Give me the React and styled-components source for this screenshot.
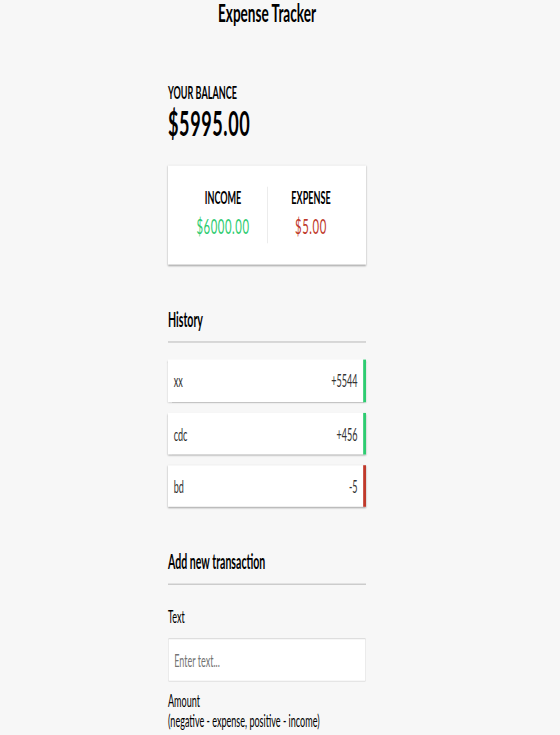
import React from 'react';
import styled, { createGlobalStyle } from 'styled-components';

const GlobalStyle = createGlobalStyle`
  *, *::before, *::after { box-sizing: border-box; }
  html, body { margin: 0; padding: 0; background: #f7f7f7; overflow: hidden; }
  body { font-family: Lato, "Open Sans", sans-serif; color: #000; }
`;

const Page = styled.div`
  display: flex;
  justify-content: center;
  padding-right: 26px;
  height: 735px;
  overflow: hidden;
`;

/* The whole sheet is drawn at its design size and squeezed like the reference */
const Sheet = styled.div`
  flex: none;
  width: 350px;
  transform: scale(0.5657, 1.067);
  transform-origin: top center;
`;

const Title = styled.h2`
  margin: 0;
  font-size: 24px;
  line-height: 24px;
  font-weight: 700;
  text-align: center;
`;

const Container = styled.div`
  margin-top: 53px;
`;

const Caption = styled.h4`
  margin: 0;
  font-size: 16px;
  line-height: 19.2px;
  font-weight: 700;
  text-transform: uppercase;
`;

const Balance = styled.h1`
  margin: 0;
  font-size: 32px;
  line-height: 38.4px;
  font-weight: 700;
  letter-spacing: 1px;
`;

const shadow = '0 1px 3px rgba(0,0,0,0.12), 0 1px 2px rgba(0,0,0,0.24)';

const Card = styled.div`
  display: flex;
  margin: 20px 0;
  padding: 20px;
  background: #fff;
  box-shadow: ${shadow};
`;

const Half = styled.div`
  flex: 1;
  text-align: center;
  border-right: ${(p) => (p.$divider ? '1px solid #dedede' : '0')};
`;

const Money = styled.p`
  margin: 5px 0;
  font-size: 20px;
  line-height: 24px;
  letter-spacing: 1px;
  color: ${(p) => (p.$kind === 'plus' ? '#2ecc71' : '#c0392b')};
`;

const SectionTitle = styled.h3`
  margin: 40px 0 10px;
  padding-bottom: 10px;
  border-bottom: 1px solid #bbb;
  font-size: 18.72px;
  line-height: 22.5px;
  font-weight: 700;
`;

const List = styled.ul`
  list-style: none;
  padding: 0;
  margin: 16px 0 40px;
`;

const Item = styled.li`
  display: flex;
  justify-content: space-between;
  margin: 10px 0;
  padding: 10px;
  background: #fff;
  box-shadow: ${shadow};
  color: #333;
  font-size: 16px;
  line-height: 19.2px;
  border-right: 5px solid ${(p) => (p.$kind === 'plus' ? '#2ecc71' : '#c0392b')};
`;

const Field = styled.div``;

const Label = styled.label`
  display: inline-block;
  margin: ${(p) => (p.$spaced ? '9px 0 10px' : '10px 0')};
  font-size: 16px;
  line-height: ${(p) => (p.$spaced ? '18px' : '19.2px')};
`;

const Input = styled.input`
  display: block;
  width: 100%;
  padding: 10px;
  border: 1px solid #dedede;
  border-radius: 2px;
  background: #fff;
  font-family: inherit;
  font-size: 16px;
  line-height: 19.2px;
  &::placeholder { color: #757575; }
`;

const Button = styled.button`
  display: block;
  width: 100%;
  margin: 10px 0 30px;
  padding: 10px;
  border: 0;
  background: #9c88ff;
  color: #fff;
  font-family: inherit;
  font-size: 16px;
  box-shadow: ${shadow};
`;

const transactions = [
  { id: 1, text: 'xx', amount: '+5544', kind: 'plus' },
  { id: 2, text: 'cdc', amount: '+456', kind: 'plus' },
  { id: 3, text: 'bd', amount: '-5', kind: 'minus' },
];

export default function App() {
  return (
    <>
      <GlobalStyle />
      <Page>
        <Sheet>
          <Title>Expense Tracker</Title>
          <Container>
            <Caption>Your Balance</Caption>
            <Balance>$5995.00</Balance>
            <Card>
              <Half $divider>
                <Caption>Income</Caption>
                <Money $kind="plus">$6000.00</Money>
              </Half>
              <Half>
                <Caption>Expense</Caption>
                <Money $kind="minus">$5.00</Money>
              </Half>
            </Card>
            <SectionTitle>History</SectionTitle>
            <List>
              {transactions.map((t) => (
                <Item key={t.id} $kind={t.kind}>
                  <span>{t.text}</span>
                  <span>{t.amount}</span>
                </Item>
              ))}
            </List>
            <SectionTitle>Add new transaction</SectionTitle>
            <form onSubmit={(e) => e.preventDefault()}>
              <Field>
                <Label htmlFor="text">Text</Label>
                <Input type="text" id="text" placeholder="Enter text..." />
              </Field>
              <Field>
                <Label htmlFor="amount" $spaced>
                  Amount <br />
                  (negative - expense, positive - income)
                </Label>
                <Input type="number" id="amount" placeholder="Enter amount..." />
              </Field>
              <Button type="submit">Add transaction</Button>
            </form>
          </Container>
        </Sheet>
      </Page>
    </>
  );
}
